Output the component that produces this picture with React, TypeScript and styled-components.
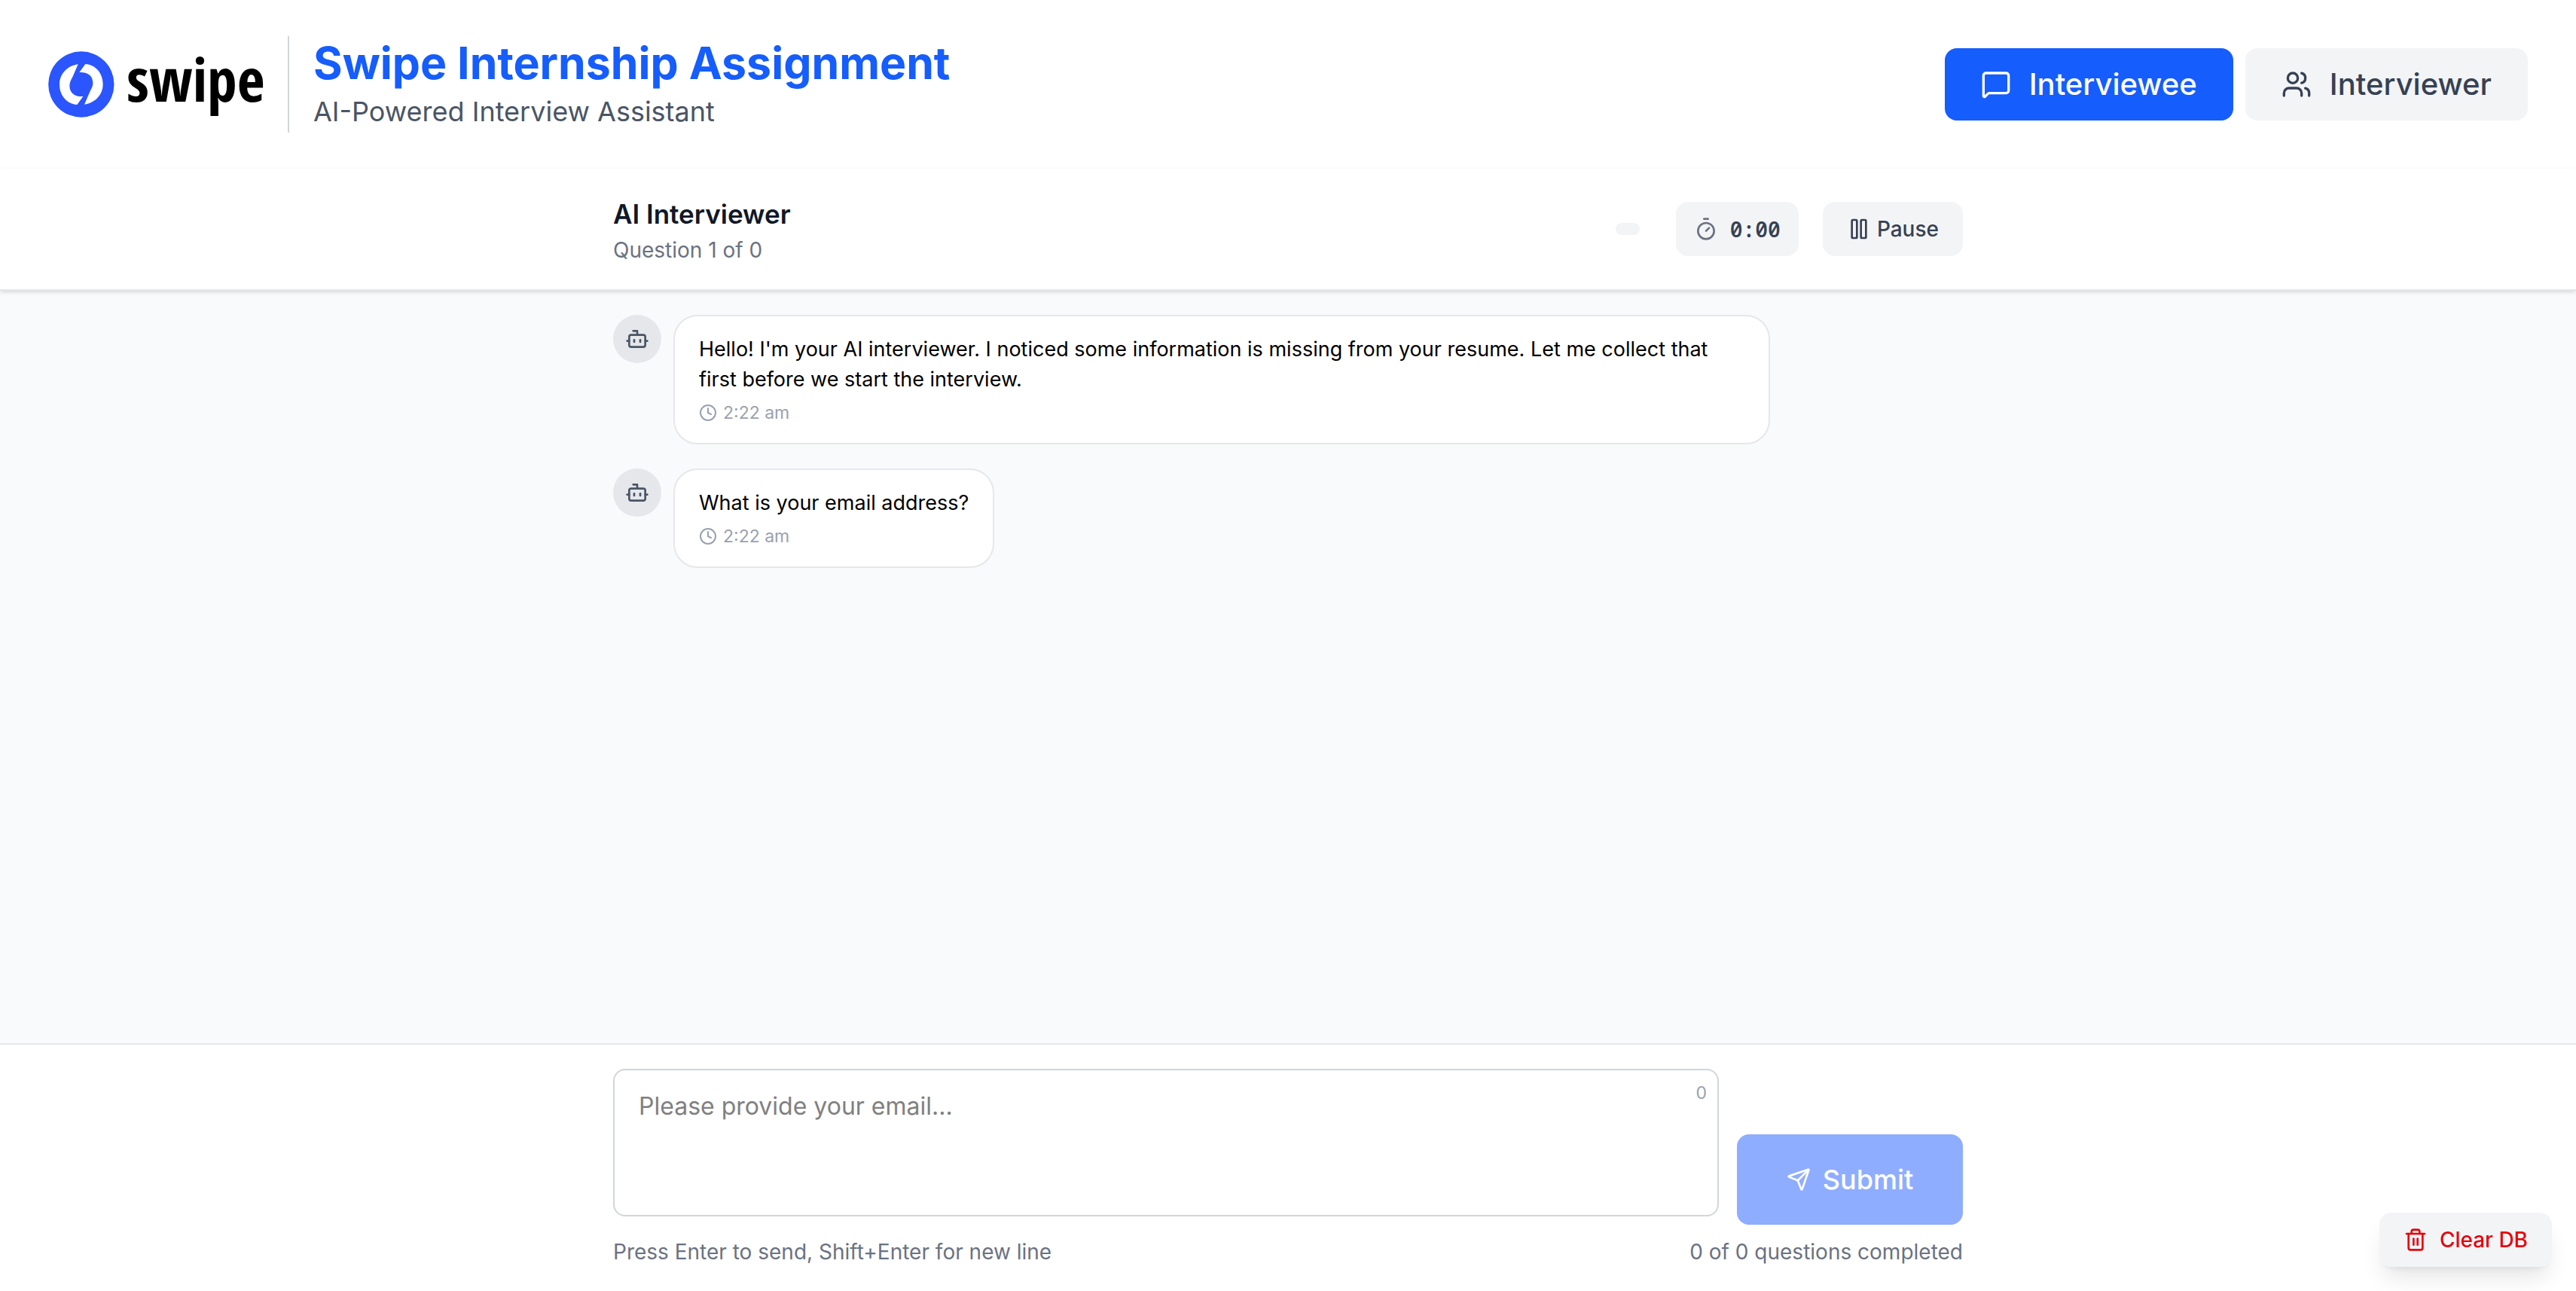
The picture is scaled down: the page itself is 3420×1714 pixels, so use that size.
import React, { useState } from "react";
import styled, { createGlobalStyle } from "styled-components";
import { Bot, Clock, MessageSquare, Pause, Send, Timer, Trash2, Users } from "lucide-react";

const GlobalStyle = createGlobalStyle`
  *, *::before, *::after { box-sizing: border-box; }
  body {
    margin: 0;
    background: #f9fafc;
    color: #000;
    font-family: Inter, "Liberation Sans", sans-serif;
    font-size: 32px;
    line-height: 48px;
  }
  h1, h2, p { margin: 0; }
  button, textarea { font: inherit; }
  svg { flex: none; display: block; }
`;

const Page = styled.div`
  min-height: 100vh;
  display: flex;
  flex-direction: column;
`;

const Header = styled.header`
  display: flex;
  align-items: center;
  justify-content: space-between;
  padding: 48px 64px;
  background: #fff;
`;

const Brand = styled.div`
  display: flex;
  align-items: center;
  gap: 32px;
`;

const Logo = styled.div`
  display: flex;
  align-items: center;
  gap: 16px;
  width: 286px;
`;

const Wordmark = styled.span`
  padding-bottom: 16px;
  color: #000;
  font-family: "Noto Sans Condensed", "Open Sans Condensed", "Roboto Condensed", Roboto, sans-serif;
  font-size: 80px;
  font-weight: 700;
  line-height: 88px;
`;

const Titles = styled.div`
  border-left: 2px solid #d1d5dc;
  padding-left: 32px;
`;

const Title = styled.h1`
  color: #155dfc;
  font-size: 59px;
  font-weight: 700;
  line-height: 72px;
`;

const Tagline = styled.p`
  color: #4a5565;
  font-size: 36px;
  line-height: 56px;
`;

const Tabs = styled.nav`
  display: flex;
  gap: 16px;
`;

const Tab = styled.button<{ $active?: boolean }>`
  display: flex;
  align-items: center;
  gap: 24px;
  height: 96px;
  padding: 0 48px;
  border: 0;
  border-radius: 16px;
  background: ${(p) => (p.$active ? "#155dfc" : "#f3f4f6")};
  color: ${(p) => (p.$active ? "#fff" : "#364153")};
  font-size: 40px;
  font-weight: 500;
`;

const Container = styled.div`
  width: 100%;
  max-width: 1792px;
  margin: 0 auto;
`;

const SubHeader = styled.section`
  position: relative;
  padding: 32px;
  background: #fff;
  border-bottom: 2px solid #e5e7eb;
  box-shadow: 0 2px 6px rgba(0, 0, 0, 0.1), 0 2px 4px -2px rgba(0, 0, 0, 0.1);
`;

const Split = styled(Container)`
  display: flex;
  align-items: center;
  justify-content: space-between;
`;

const Heading = styled.h2`
  color: #101828;
  font-size: 35px;
  font-weight: 600;
  line-height: 56px;
`;

const Muted = styled.p`
  color: #6a7282;
  font-size: 28px;
  line-height: 40px;
`;

const Status = styled.div`
  display: flex;
  align-items: center;
`;

const Difficulty = styled.span`
  width: 32px;
  height: 16px;
  margin-right: 48px;
  border-radius: 8px;
  background: #f3f4f6;
`;

const Countdown = styled.div`
  display: flex;
  align-items: center;
  gap: 16px;
  height: 72px;
  margin-right: 32px;
  padding: 0 24px;
  border-radius: 16px;
  background: #f3f4f6;
  color: #6a7282;
`;

const Time = styled.span`
  color: #364153;
  font-family: "Noto Sans Mono", "DejaVu Sans Mono", monospace;
  font-size: 28px;
  font-weight: 600;
  line-height: 40px;
`;

const SmallButton = styled.button`
  display: flex;
  align-items: center;
  gap: 8px;
  height: 72px;
  padding: 0 32px;
  border: 0;
  border-radius: 16px;
  background: #f3f4f6;
  color: #364153;
  font-size: 28px;
  font-weight: 500;
`;

const Conversation = styled.main`
  flex: 1;
  padding: 32px;
`;

const Messages = styled(Container)`
  display: flex;
  flex-direction: column;
  gap: 32px;
`;

const Message = styled.article`
  display: flex;
  align-items: flex-start;
  gap: 16px;
  max-width: 1536px;
`;

const Avatar = styled.div`
  display: grid;
  place-items: center;
  flex: none;
  width: 64px;
  height: 64px;
  border-radius: 50%;
  background: #e5e7eb;
  color: #4a5565;
`;

const Bubble = styled.div`
  padding: 24px 32px;
  border: 2px solid #e5e7eb;
  border-radius: 32px;
  background: #fff;
`;

const MessageText = styled.p`
  font-size: 27px;
  line-height: 40px;
`;

const Stamp = styled.div`
  display: flex;
  align-items: center;
  gap: 8px;
  margin-top: 8px;
  color: #99a1af;
  font-size: 23px;
  line-height: 32px;
`;

const Footer = styled.footer`
  padding: 32px;
  background: #fff;
  border-top: 2px solid #e5e7eb;
`;

const Form = styled.form`
  display: flex;
  align-items: flex-end;
  gap: 24px;
`;

const Field = styled.div`
  position: relative;
  flex: 1;
  padding-bottom: 11px;
`;

const Answer = styled.textarea`
  display: block;
  width: 100%;
  height: 196px;
  padding: 24px 32px;
  border: 2px solid #d1d5dc;
  border-radius: 16px;
  outline: 0;
  resize: none;
  background: #fff;
  color: #101828;
  &::placeholder { color: #808080; opacity: 1; }
`;

const Counter = styled.span`
  position: absolute;
  top: 16px;
  right: 16px;
  color: #99a1af;
  font-size: 23px;
  line-height: 32px;
`;

const Submit = styled.button`
  display: flex;
  align-items: center;
  justify-content: center;
  gap: 16px;
  min-width: 300px;
  height: 120px;
  border: 0;
  border-radius: 16px;
  background: #8fadff;
  color: #fff;
  font-size: 36px;
  font-weight: 500;
`;

const Hints = styled.div`
  display: flex;
  justify-content: space-between;
  margin-top: 16px;
`;

const ClearButton = styled(SmallButton)`
  position: fixed;
  right: 32px;
  bottom: 32px;
  gap: 16px;
  color: #e7000b;
  box-shadow: 0 20px 30px -6px rgba(0, 0, 0, 0.1), 0 8px 12px -8px rgba(0, 0, 0, 0.1);
`;

const messages = [
  {
    text: "Hello! I'm your AI interviewer. I noticed some information is missing from your resume. Let me collect that first before we start the interview.",
    time: "2:22 am",
  },
  { text: "What is your email address?", time: "2:22 am" },
];

function SwipeMark() {
  return (
    <svg width="88" height="88" viewBox="12 23 264 264" aria-hidden="true">
      <circle cx="143.5" cy="155" r="131" fill="#2a55ff" />
      <g fill="#fff">
        <path d="M131 75C88 81 57 114 57 155c0 45 30 79 70 81l24-33c-34 2-54-14-54-43 0-14 6-22 12-34z" />
        <path d="M156 235c43-6 74-39 74-80 0-45-30-79-70-81l-24 33c34-2 54 14 54 43 0 14-6 22-12 34z" />
      </g>
    </svg>
  );
}

export default function App() {
  const [answer, setAnswer] = useState("");
  return (
    <Page>
      <GlobalStyle />
      <Header>
        <Brand>
          <Logo>
            <SwipeMark />
            <Wordmark>swipe</Wordmark>
          </Logo>
          <Titles>
            <Title>Swipe Internship Assignment</Title>
            <Tagline>AI-Powered Interview Assistant</Tagline>
          </Titles>
        </Brand>
        <Tabs>
          <Tab type="button" $active>
            <MessageSquare size={40} />
            Interviewee
          </Tab>
          <Tab type="button">
            <Users size={40} />
            Interviewer
          </Tab>
        </Tabs>
      </Header>

      <SubHeader>
        <Split>
          <div>
            <Heading>AI Interviewer</Heading>
            <Muted>Question 1 of 0</Muted>
          </div>
          <Status>
            <Difficulty />
            <Countdown>
              <Timer size={32} />
              <Time>0:00</Time>
            </Countdown>
            <SmallButton type="button">
              <Pause size={32} />
              Pause
            </SmallButton>
          </Status>
        </Split>
      </SubHeader>

      <Conversation>
        <Messages>
          {messages.map((message) => (
            <Message key={message.text}>
              <Avatar>
                <Bot size={32} />
              </Avatar>
              <Bubble>
                <MessageText>{message.text}</MessageText>
                <Stamp>
                  <Clock size={24} />
                  {message.time}
                </Stamp>
              </Bubble>
            </Message>
          ))}
        </Messages>
      </Conversation>

      <Footer>
        <Container>
          <Form onSubmit={(event) => event.preventDefault()}>
            <Field>
              <Answer
                aria-label="Your answer"
                placeholder="Please provide your email..."
                value={answer}
                onChange={(event) => setAnswer(event.target.value)}
              />
              <Counter>{answer.length}</Counter>
            </Field>
            <Submit type="submit" disabled={!answer}>
              <Send size={32} />
              Submit
            </Submit>
          </Form>
          <Hints>
            <Muted>Press Enter to send, Shift+Enter for new line</Muted>
            <Muted>0 of 0 questions completed</Muted>
          </Hints>
        </Container>
      </Footer>

      <ClearButton type="button">
        <Trash2 size={32} />
        Clear DB
      </ClearButton>
    </Page>
  );
}
